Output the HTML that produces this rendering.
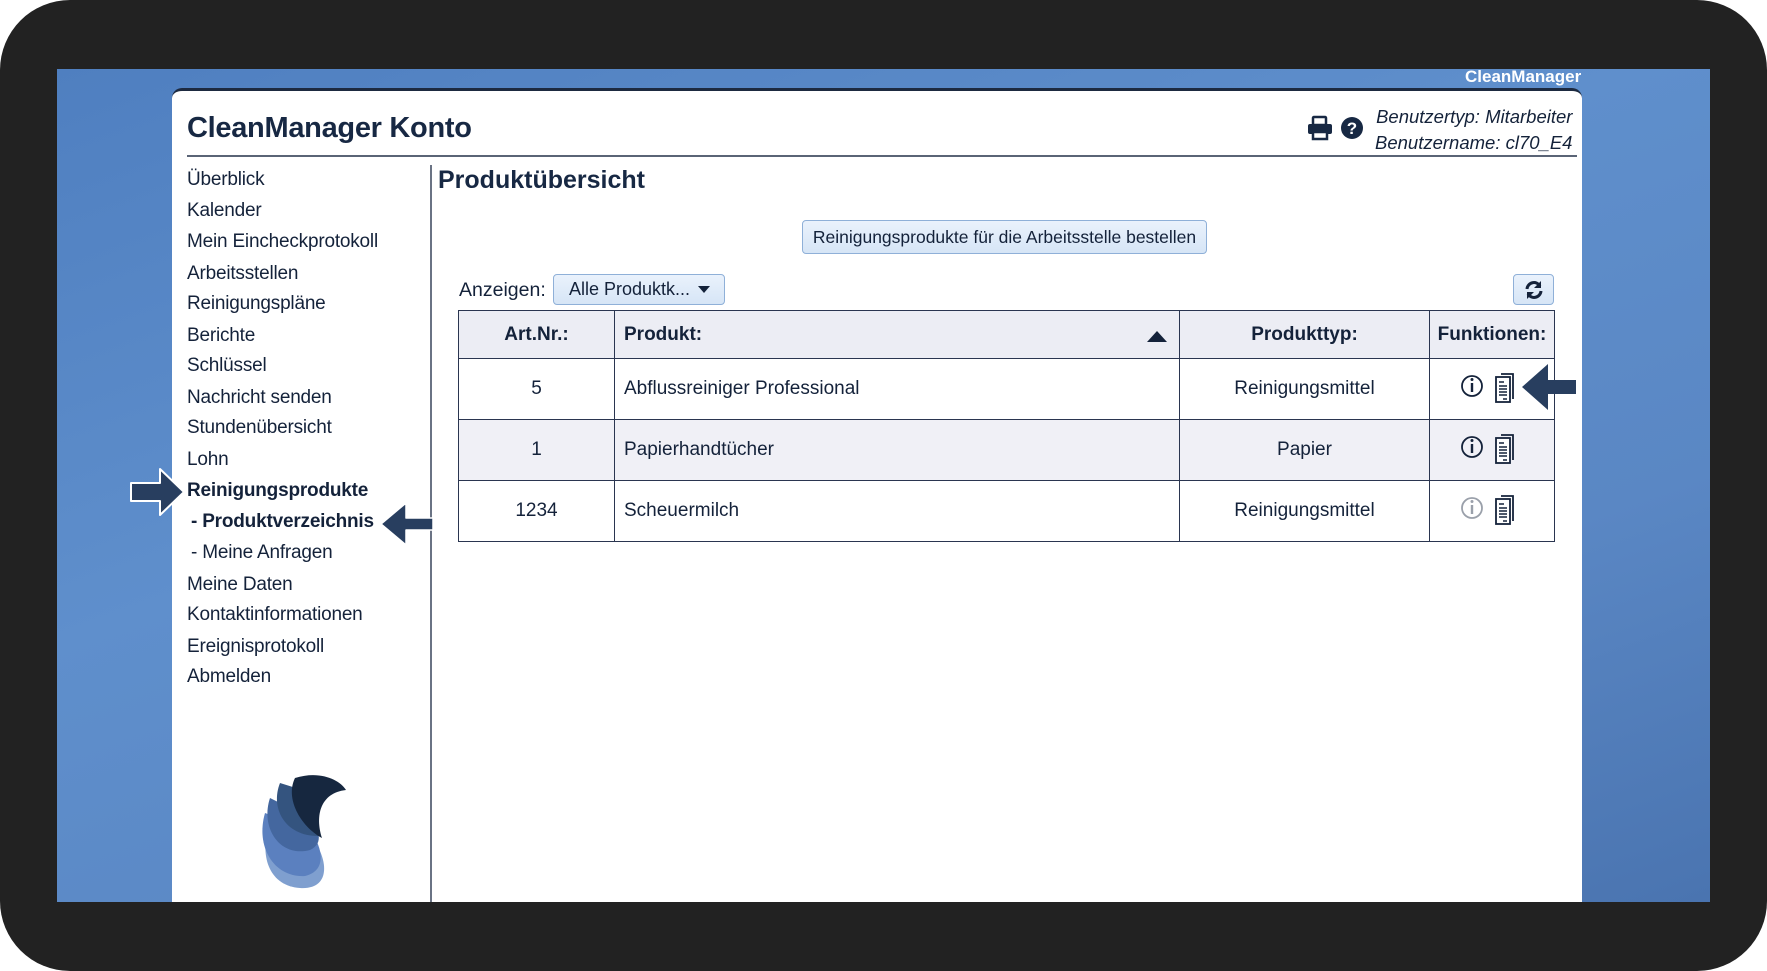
<!DOCTYPE html>
<html><head><meta charset="utf-8"><style>
*{margin:0;padding:0;box-sizing:border-box}
body{width:1767px;height:971px;background:#fff;font-family:"Liberation Sans",sans-serif;color:#14223a;position:relative;overflow:hidden}
.frame{position:absolute;left:0;top:0;width:1767px;height:971px;background:#222222;border-radius:70px}
.blue{position:absolute;left:57px;top:69px;width:1653px;height:833px;background:linear-gradient(160deg,#4f7fc0 0%,#5f8fcc 40%,#5a87c4 70%,#4a74b0 100%)}
.card{position:absolute;left:172px;top:88px;width:1410px;height:814px;background:#fff;border-top:3px solid #1d2a40;border-radius:10px 10px 0 0}
.a{position:absolute;white-space:nowrap}
.nav{position:absolute;left:187px;font-size:19px;line-height:24px;letter-spacing:-0.2px}
table{position:absolute;left:458px;top:310px;width:1097px;border-collapse:collapse;font-size:19px}
td,th{border:1.5px solid #2a3550;text-align:center}
th{background:#ecedf4;height:48px;font-weight:bold}
td{height:61px}
tr.alt td{background:#f0f0f6}
</style></head><body>
<div class="frame"></div>
<div class="blue"></div>
<div class="a" style="left:1465px;top:67px;color:#fff;font-weight:bold;font-size:17px">CleanManager</div>
<div class="card"></div>
<div class="a" style="left:187px;top:112px;font-size:29px;font-weight:bold;color:#172843;letter-spacing:-0.3px">CleanManager Konto</div>
<div class="a" style="left:187px;top:155px;width:1390px;height:2px;background:#5a6476"></div>
<svg class="a" style="left:1307px;top:115px" width="26" height="26" viewBox="0 0 26 26"><rect x="6" y="2" width="13" height="8" rx="1" fill="none" stroke="#172843" stroke-width="2.5"/><rect x="1" y="9" width="24" height="10" rx="2" fill="#172843"/><rect x="6" y="17" width="14" height="7" fill="#fff" stroke="#172843" stroke-width="2.5"/></svg>
<svg class="a" style="left:1340px;top:116px" width="24" height="24" viewBox="0 0 24 24"><circle cx="12" cy="12" r="11" fill="#172843"/><text x="12" y="18" text-anchor="middle" fill="#fff" font-family="Liberation Sans" font-weight="bold" font-size="17">?</text></svg>
<div class="a" style="left:1375px;top:104px;font-size:18.5px;font-style:italic;line-height:26px;text-align:right">Benutzertyp: Mitarbeiter<br>Benutzername: cl70_E4</div>
<div class="a" style="left:430px;top:165px;width:2px;height:737px;background:#6a7384"></div>
<div class="nav" style="top:168px">Überblick</div>
<div class="nav" style="top:199px">Kalender</div>
<div class="nav" style="top:230px">Mein Eincheckprotokoll</div>
<div class="nav" style="top:262px">Arbeitsstellen</div>
<div class="nav" style="top:292px">Reinigungspläne</div>
<div class="nav" style="top:324px">Berichte</div>
<div class="nav" style="top:354px">Schlüssel</div>
<div class="nav" style="top:386px">Nachricht senden</div>
<div class="nav" style="top:416px">Stundenübersicht</div>
<div class="nav" style="top:448px">Lohn</div>
<div class="nav" style="top:479px;font-weight:bold">Reinigungsprodukte</div>
<div class="nav" style="top:510px;left:191px;font-weight:bold">- Produktverzeichnis</div>
<div class="nav" style="top:541px;left:191px">- Meine Anfragen</div>
<div class="nav" style="top:573px">Meine Daten</div>
<div class="nav" style="top:603px">Kontaktinformationen</div>
<div class="nav" style="top:635px">Ereignisprotokoll</div>
<div class="nav" style="top:665px">Abmelden</div>
<svg class="a" style="left:128px;top:466px" width="60" height="52" viewBox="0 0 60 52"><path d="M3 17 H32 V3 L56 26 L32 49 V35 H3 Z" fill="#283e5f" stroke="#fff" stroke-width="2" stroke-linejoin="round"/></svg>
<svg class="a" style="left:378px;top:500px" width="58" height="48" viewBox="0 0 58 48"><path d="M55 18 H28 V3 L3 24 L28 45 V30 H55 Z" fill="#283e5f" stroke="#fff" stroke-width="1.5" stroke-linejoin="round"/></svg>
<svg class="a" style="left:240px;top:758px" width="130" height="140" viewBox="0 0 130 140"><path d="M28 70 C20 100 30 128 60 130 C92 132 88 100 72 80 Z" fill="#7f9fcf"/><path d="M25 55 C15 90 35 120 65 118 C90 112 80 85 70 72 Z" fill="#5b80bf"/><path d="M30 40 C20 70 40 100 70 92 C85 85 78 70 70 60 Z" fill="#44679f"/><path d="M40 25 C30 50 45 78 78 78 C70 60 66 45 72 35 Z" fill="#34547f"/><path d="M55 20 C45 40 60 68 82 80 C75 58 80 35 106 32 C100 22 80 12 55 20 Z" fill="#16273f"/></svg>
<div class="a" style="left:438px;top:166px;font-size:25px;font-weight:bold;color:#172843">Produktübersicht</div>
<div class="a" style="left:802px;top:220px;width:405px;height:34px;border:1px solid #8fb0d8;border-radius:4px;background:linear-gradient(#eaf2fc,#d6e5f6);font-size:17.5px;text-align:center;line-height:32px">Reinigungsprodukte für die Arbeitsstelle bestellen</div>
<div class="a" style="left:459px;top:279px;font-size:19.5px">Anzeigen:</div>
<div class="a" style="left:553px;top:274px;width:172px;height:31px;border:1px solid #8fb0d8;border-radius:4px;background:linear-gradient(#eaf2fc,#d6e5f6);font-size:18px;line-height:29px;padding-left:15px">Alle Produktk...<span style="position:absolute;right:14px;top:11px;border-left:6px solid transparent;border-right:6px solid transparent;border-top:7px solid #14223a"></span></div>
<div class="a" style="left:1513px;top:274px;width:41px;height:31px;border:1px solid #8fb0d8;border-radius:4px;background:linear-gradient(#eaf2fc,#d6e5f6)"><svg style="position:absolute;left:10px;top:5px" width="20" height="20" viewBox="0 0 20 20"><path d="M3 9 A7 7 0 0 1 16 6" fill="none" stroke="#14223a" stroke-width="3"/><path d="M17 1 V8 H10 Z" fill="#14223a"/><path d="M17 11 A7 7 0 0 1 4 14" fill="none" stroke="#14223a" stroke-width="3"/><path d="M3 19 V12 H10 Z" fill="#14223a"/></svg></div>
<table>
<tr><th style="width:156px">Art.Nr.:</th><th style="width:565px;text-align:left;padding-left:9px;position:relative">Produkt:<span style="position:absolute;right:12px;top:20px;border-left:10px solid transparent;border-right:10px solid transparent;border-bottom:11px solid #14223a"></span></th><th style="width:250px">Produkttyp:</th><th>Funktionen:</th></tr>
<tr><td>5</td><td style="text-align:left;padding-left:9px">Abflussreiniger Professional</td><td>Reinigungsmittel</td><td></td></tr>
<tr class="alt"><td>1</td><td style="text-align:left;padding-left:9px">Papierhandtücher</td><td>Papier</td><td></td></tr>
<tr><td>1234</td><td style="text-align:left;padding-left:9px">Scheuermilch</td><td>Reinigungsmittel</td><td></td></tr>
</table>
<svg class="a" style="left:1459px;top:371px" width="100" height="180" viewBox="0 0 100 180">
<g><circle cx="13" cy="15" r="10" fill="none" stroke="#14223a" stroke-width="1.8"/><rect x="11.8" y="12" width="2.4" height="9" fill="#14223a"/><circle cx="13" cy="8.5" r="1.5" fill="#14223a"/>
<path d="M42 3 H54 V28" fill="none" stroke="#14223a" stroke-width="1.8"/><rect x="37" y="6" width="14" height="25" fill="#fff" stroke="#14223a" stroke-width="1.8"/><path d="M40 11 h5 M40 15 h8 M40 18 h8 M40 21 h8 M40 24 h8 M44 28 h4" stroke="#14223a" stroke-width="1.5"/></g>
<g transform="translate(0,61)"><circle cx="13" cy="15" r="10" fill="none" stroke="#14223a" stroke-width="1.8"/><rect x="11.8" y="12" width="2.4" height="9" fill="#14223a"/><circle cx="13" cy="8.5" r="1.5" fill="#14223a"/>
<path d="M42 3 H54 V28" fill="none" stroke="#14223a" stroke-width="1.8"/><rect x="37" y="6" width="14" height="25" fill="#fff" stroke="#14223a" stroke-width="1.8"/><path d="M40 11 h5 M40 15 h8 M40 18 h8 M40 21 h8 M40 24 h8 M44 28 h4" stroke="#14223a" stroke-width="1.5"/></g>
<g transform="translate(0,122)"><circle cx="13" cy="15" r="10" fill="none" stroke="#9aa0aa" stroke-width="1.8"/><rect x="11.8" y="12" width="2.4" height="9" fill="#9aa0aa"/><circle cx="13" cy="8.5" r="1.5" fill="#9aa0aa"/>
<path d="M42 3 H54 V28" fill="none" stroke="#14223a" stroke-width="1.8"/><rect x="37" y="6" width="14" height="25" fill="#fff" stroke="#14223a" stroke-width="1.8"/><path d="M40 11 h5 M40 15 h8 M40 18 h8 M40 21 h8 M40 24 h8 M44 28 h4" stroke="#14223a" stroke-width="1.5"/></g>
</svg>
<svg class="a" style="left:1520px;top:362px" width="58" height="50" viewBox="0 0 58 50"><path d="M56 18 H28 V2 L2 25 L28 48 V32 H56 Z" fill="#283e5f"/></svg>
</body></html>
